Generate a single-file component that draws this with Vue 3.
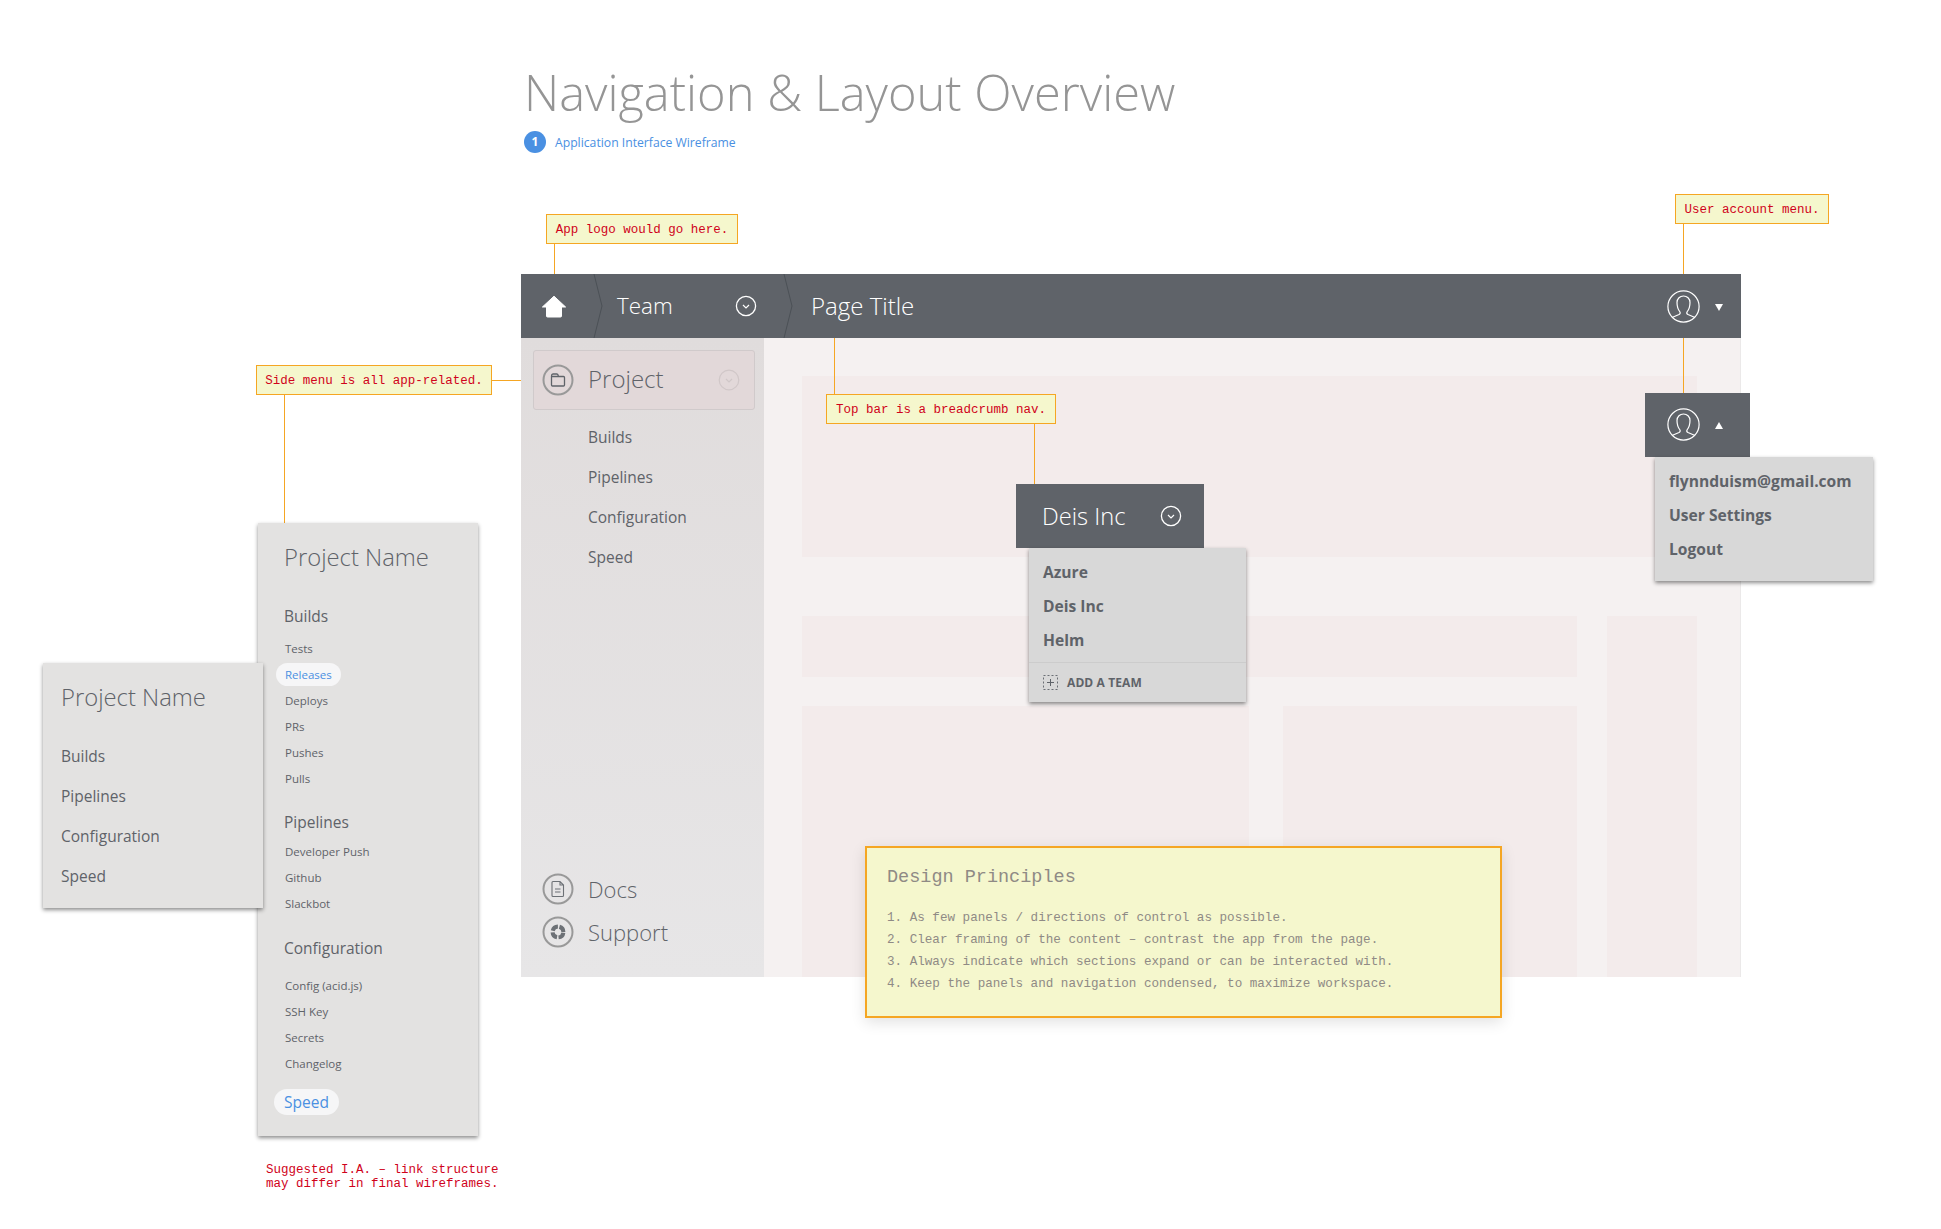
<script setup>
const sideItems = ['Builds', 'Pipelines', 'Configuration', 'Speed']
const teams = ['Azure', 'Deis Inc', 'Helm']
const userItems = ['flynnduism@gmail.com', 'User Settings', 'Logout']
const principles = [
  'As few panels / directions of control as possible.',
  'Clear framing of the content – contrast the app from the page.',
  'Always indicate which sections expand or can be interacted with.',
  'Keep the panels and navigation condensed, to maximize workspace.',
]
const groups = [
  { title: 'Builds', links: ['Tests', 'Releases', 'Deploys', 'PRs', 'Pushes', 'Pulls'] },
  { title: 'Pipelines', links: ['Developer Push', 'Github', 'Slackbot'] },
  { title: 'Configuration', links: ['Config (acid.js)', 'SSH Key', 'Secrets', 'Changelog'] },
]
</script>

<template>
  <div class="canvas">
    <header class="page-head">
      <h1>Navigation &amp; Layout Overview</h1>
      <div class="sub"><span class="badge">1</span><span>Application Interface Wireframe</span></div>
    </header>

    <!-- the app window -->
    <section class="window">
      <div class="topbar">
        <div class="crumb crumb-home">
          <svg width="26" height="23" viewBox="0 0 26 23"><path d="M13 1.2 L24.6 12 L20.5 12 L20.5 21 Q20.5 22 19.5 22 L6.5 22 Q5.5 22 5.5 21 L5.5 12 L1.4 12 Z" fill="#fff" stroke="#fff" stroke-linejoin="round" /></svg>
        </div>
        <svg class="sep" width="10" height="64" viewBox="0 0 10 64"><path d="M1 0 L9 32 L1 64" fill="none" stroke="#4c5056" /></svg>
        <div class="crumb crumb-team">
          <span class="team-label">Team</span>
          <svg width="22" height="22" viewBox="0 0 22 22"><circle cx="11" cy="11" r="9.6" fill="none" stroke="#fff" stroke-width="1.3" /><path d="M8 10 L11 13 L14 10" fill="none" stroke="#fff" stroke-width="1.2" /></svg>
        </div>
        <svg class="sep" width="10" height="64" viewBox="0 0 10 64"><path d="M1 0 L9 32 L1 64" fill="none" stroke="#4c5056" /></svg>
        <div class="crumb crumb-page">Page Title</div>
        <div class="user">
          <svg width="33" height="33" viewBox="0 0 33 33"><circle cx="16.5" cy="16.5" r="15.6" fill="none" stroke="#fff" stroke-width="1.2" /><path d="M5 27.5 L12 24.5 C13 24 13.5 23 13 22 C11 19.5 10 16 10 12.5 C10 8.5 13 6 16.5 6 C20 6 23 8.5 23 12.5 C23 16 22 19.5 20 22 C19.5 23 20 24 21 24.5 L28 27.5" fill="none" stroke="#fff" stroke-width="1.2" /></svg>
          <i class="caret-down"></i>
        </div>
      </div>
      <div class="app-body">
        <aside class="sidebar">
          <div class="project">
            <svg width="32" height="32" viewBox="0 0 32 32"><circle cx="16" cy="16" r="14.5" fill="none" stroke="#999" stroke-width="2" /><path d="M9.5 12 V21 Q9.5 22 10.5 22 H21.5 Q22.5 22 22.5 21 V13.5 Q22.5 12.5 21.5 12.5 H9.5 M9.5 12 Q9.5 10 11 10 H15 Q16 10 16.5 12.5" fill="none" stroke="#5f6369" stroke-width="1.3" /></svg>
            <span class="project-name">Project</span>
            <svg width="22" height="22" viewBox="0 0 22 22"><circle cx="11" cy="11" r="9.8" fill="none" stroke="#d0c7c8" stroke-width="1.2" /><path d="M8 10 L11 13 L14 10" fill="none" stroke="#d0c7c8" stroke-width="1.2" /></svg>
          </div>
          <ul class="side-list">
            <li v-for="item in sideItems" :key="item">{{ item }}</li>
          </ul>
          <div class="side-foot">
            <div class="foot-row">
              <svg width="32" height="32" viewBox="0 0 32 32"><circle cx="16" cy="16" r="14.5" fill="none" stroke="#999" stroke-width="2" /><path d="M11 8.5 H18 L21.5 12 V22.5 Q21.5 23.5 20.5 23.5 H11 Q10 23.5 10 22.5 V9.5 Q10 8.5 11 8.5 Z M18 8.5 V12 H21.5 M13 16 H18.5 M13 19 H18.5" fill="none" stroke="#6d7176" stroke-width="1.1" /></svg>
              <span>Docs</span>
            </div>
            <div class="foot-row">
              <svg width="32" height="32" viewBox="0 0 32 32"><circle cx="16" cy="16" r="14.5" fill="none" stroke="#999" stroke-width="2" /><circle cx="16" cy="16" r="5.4" fill="none" stroke="#6d7176" stroke-width="4" stroke-dasharray="6.9 1.6" stroke-dashoffset="-0.8" /></svg>
              <span>Support</span>
            </div>
          </div>
        </aside>
        <main class="workspace">
          <div class="block block-hero"></div>
          <div class="work-grid">
            <div class="work-left">
              <div class="block block-strip"></div>
              <div class="work-cols">
                <div class="block"></div>
                <div class="block"></div>
              </div>
            </div>
            <div class="block"></div>
          </div>
        </main>
      </div>
    </section>

    <!-- connector lines -->
    <i class="line l-logo"></i>
    <i class="line l-user-a"></i>
    <i class="line l-user-b"></i>
    <i class="line l-crumb-a"></i>
    <i class="line l-crumb-b"></i>
    <i class="line l-side-h"></i>
    <i class="line l-side-v"></i>

    <!-- annotations -->
    <div class="note n-logo">App logo would go here.</div>
    <div class="note n-user">User account menu.</div>
    <div class="note n-crumb">Top bar is a breadcrumb nav.</div>
    <div class="note n-side">Side menu is all app-related.</div>
    <p class="ia-note">Suggested I.A. – link structure<br />may differ in final wireframes.</p>

    <!-- team dropdown -->
    <div class="drop-head team-head">
      <span>Deis Inc</span>
      <svg width="22" height="22" viewBox="0 0 22 22"><circle cx="11" cy="11" r="9.6" fill="none" stroke="#fff" stroke-width="1.3" /><path d="M8 10 L11 13 L14 10" fill="none" stroke="#fff" stroke-width="1.2" /></svg>
    </div>
    <div class="menu team-menu">
      <div class="menu-items">
        <div v-for="t in teams" :key="t" class="menu-item">{{ t }}</div>
      </div>
      <div class="add-team">
        <svg width="15" height="15" viewBox="0 0 15 15"><rect x="0.5" y="0.5" width="14" height="14" fill="none" stroke="#6b6f75" stroke-dasharray="2 2" /><path d="M7.5 4 V11 M4 7.5 H11" stroke="#5f6369" /></svg>
        <span>ADD A TEAM</span>
      </div>
    </div>

    <!-- user dropdown -->
    <div class="drop-head user-head">
      <svg width="33" height="33" viewBox="0 0 33 33"><circle cx="16.5" cy="16.5" r="15.6" fill="none" stroke="#fff" stroke-width="1.2" /><path d="M5 27.5 L12 24.5 C13 24 13.5 23 13 22 C11 19.5 10 16 10 12.5 C10 8.5 13 6 16.5 6 C20 6 23 8.5 23 12.5 C23 16 22 19.5 20 22 C19.5 23 20 24 21 24.5 L28 27.5" fill="none" stroke="#fff" stroke-width="1.2" /></svg>
      <i class="caret-up"></i>
    </div>
    <div class="menu user-menu">
      <div v-for="u in userItems" :key="u" class="menu-item">{{ u }}</div>
    </div>

    <!-- expanded side menu -->
    <div class="flyout fly-full">
      <div class="fly-title">Project Name</div>
      <div v-for="g in groups" :key="g.title" class="fly-group">
        <div class="fly-head">{{ g.title }}</div>
        <div
          v-for="l in g.links"
          :key="l"
          class="fly-link"
          :class="{ active: l === 'Releases' }"
        ><span>{{ l }}</span></div>
      </div>
      <div class="fly-speed"><span>Speed</span></div>
    </div>

    <!-- collapsed side menu -->
    <div class="flyout fly-short">
      <div class="fly-title">Project Name</div>
      <div v-for="item in sideItems" :key="item" class="short-item">{{ item }}</div>
    </div>

    <!-- principles -->
    <div class="principles">
      <h2>Design Principles</h2>
      <ol>
        <li v-for="(p, i) in principles" :key="p">{{ i + 1 }}. {{ p }}</li>
      </ol>
    </div>
  </div>
</template>

<style>
html, body { margin: 0; background: #fff; }
</style>

<style scoped>
.canvas {
  position: relative;
  width: 1941px;
  height: 1229px;
  overflow: hidden;
  background: #fff;
  font-family: "Open Sans", "Noto Sans", sans-serif;
  color: #5f6369;
}

/* ── page heading ── */
.page-head { position: absolute; left: 524px; top: 60px; }
h1 {
  margin: 0;
  font-size: 48.8px;
  font-weight: 300;
  line-height: 64px;
  color: #959595;
  white-space: nowrap;
}
.sub {
  display: flex;
  align-items: center;
  gap: 9px;
  margin-top: 7px;
  font-size: 12.2px;
  color: #4a90e2;
}
.badge {
  width: 22px;
  height: 22px;
  border-radius: 50%;
  background: #4a90e2;
  color: #fff;
  font-size: 12px;
  font-weight: 700;
  text-align: center;
  line-height: 22px;
}

/* ── app window ── */
.window {
  position: absolute;
  left: 521px;
  top: 274px;
  width: 1220px;
  height: 703px;
  display: flex;
  flex-direction: column;
}
.topbar {
  height: 64px;
  flex-shrink: 0;
  display: flex;
  align-items: center;
  background: #5f6369;
  color: #fff;
}
.crumb { font-size: 24px; font-weight: 300; white-space: nowrap; }
.crumb-home { width: 72px; padding-left: 20px; box-sizing: border-box; display: flex; }
.sep { flex-shrink: 0; }
.crumb-team {
  width: 180px;
  box-sizing: border-box;
  padding: 0 26px 0 14px;
  display: flex;
  align-items: center;
  justify-content: space-between;
}
.team-label { font-size: 22.4px; margin-top: -2px; }
.crumb-page { margin-left: 18px; margin-top: -2px; }
.user {
  margin-left: auto;
  display: flex;
  align-items: center;
  gap: 15px;
  padding-right: 18px;
}
.caret-down, .caret-up { width: 0; height: 0; border-left: 4px solid transparent; border-right: 4px solid transparent; }
.caret-down { border-top: 7px solid #fff; margin-top: 2px; }
.caret-up { border-bottom: 7px solid #fff; margin-top: 2px; }

.app-body { flex: 1; min-height: 0; display: flex; }
.sidebar {
  width: 243px;
  flex-shrink: 0;
  box-sizing: border-box;
  padding: 12px 9px 0 12px;
  display: flex;
  flex-direction: column;
  background: linear-gradient(#e0dcdc, #e7e6e7);
}
.project {
  height: 60px;
  box-sizing: border-box;
  display: flex;
  align-items: center;
  padding: 0 14px 0 8px;
  background: #e2d8d9;
  border: 1px solid #d0cacb;
  border-radius: 3px;
}
.project-name { flex: 1; margin-left: 14px; margin-top: -4px; font-size: 24px; font-weight: 300; }
.side-list { list-style: none; margin: 7px 0 0; padding: 0 0 0 55px; }
.side-list li { height: 40px; line-height: 40px; font-size: 15.5px; }
.side-foot { margin-top: auto; padding: 0 0 29px 9px; display: flex; flex-direction: column; gap: 11px; }
.foot-row { display: flex; align-items: center; gap: 14px; font-size: 22px; font-weight: 300; }
.foot-row span { line-height: 32px; }

.workspace {
  flex: 1;
  box-sizing: border-box;
  padding: 38px 43px 0 38px;
  display: flex;
  flex-direction: column;
  gap: 59px;
  background: #f5f1f1;
  border-right: 1px solid #ebe9e9;
}
.block { background: #f3ebeb; }
.block-hero { height: 181px; }
.work-grid { flex: 1; display: grid; grid-template-columns: 775px 90px; gap: 30px; }
.work-left { display: flex; flex-direction: column; gap: 29px; }
.block-strip { height: 61px; }
.work-cols { flex: 1; display: grid; grid-template-columns: 447px 294px; gap: 34px; }

/* ── connectors ── */
.line { position: absolute; background: #f5a623; }
.l-logo { left: 554px; top: 244px; width: 1px; height: 30px; }
.l-user-a { left: 1683px; top: 224px; width: 1px; height: 50px; }
.l-user-b { left: 1683px; top: 338px; width: 1px; height: 55px; }
.l-crumb-a { left: 834px; top: 338px; width: 1px; height: 56px; }
.l-crumb-b { left: 1034px; top: 424px; width: 1px; height: 60px; }
.l-side-h { left: 492px; top: 380px; width: 29px; height: 1px; }
.l-side-v { left: 284px; top: 395px; width: 1px; height: 128px; }

/* ── annotations ── */
.note {
  position: absolute;
  height: 30px;
  box-sizing: border-box;
  border: 1px solid #f5a623;
  background: #f5f7cd;
  color: #d0021b;
  font-family: "Liberation Mono", monospace;
  font-size: 12.5px;
  line-height: 30px;
  white-space: nowrap;
  text-align: center;
}
.n-logo { left: 546px; top: 214px; width: 192px; }
.n-user { left: 1675px; top: 194px; width: 154px; }
.n-crumb { left: 826px; top: 394px; width: 230px; }
.n-side { left: 256px; top: 365px; width: 236px; }
.ia-note {
  position: absolute;
  left: 266px;
  top: 1163px;
  margin: 0;
  color: #d0021b;
  font-family: "Liberation Mono", monospace;
  font-size: 12.5px;
  line-height: 14px;
  white-space: nowrap;
}

/* ── dropdowns ── */
.drop-head {
  position: absolute;
  box-sizing: border-box;
  height: 64px;
  display: flex;
  align-items: center;
  background: #5f6369;
  color: #fff;
}
.team-head {
  left: 1016px;
  top: 484px;
  width: 188px;
  padding: 0 22px 0 26px;
  justify-content: space-between;
  font-size: 23.7px;
  font-weight: 300;
}
.user-head {
  left: 1645px;
  top: 393px;
  width: 105px;
  padding: 0 0 2px 22px;
  gap: 15px;
}
.menu {
  position: absolute;
  box-sizing: border-box;
  background: #d8d8d8;
  box-shadow: 0 2px 4px rgba(0, 0, 0, 0.45);
}
.menu-item {
  height: 34px;
  line-height: 34px;
  font-size: 15.6px;
  font-weight: 700;
  white-space: nowrap;
}
.team-menu { left: 1029px; top: 548px; width: 217px; height: 154px; }
.menu-items { height: 114px; box-sizing: border-box; padding: 7px 0 0 14px; }
.add-team {
  height: 40px;
  box-sizing: border-box;
  border-top: 1px solid #ccc;
  padding-left: 14px;
  display: flex;
  align-items: center;
  gap: 9px;
  font-size: 12px;
  font-weight: 700;
  letter-spacing: 0.1px;
}
.user-menu { left: 1655px; top: 457px; width: 218px; height: 124px; padding: 7px 0 0 14px; }

/* ── side menu flyouts ── */
.flyout {
  position: absolute;
  box-sizing: border-box;
  background: #e3e2e1;
  box-shadow: 0 2px 4px rgba(0, 0, 0, 0.45);
}
.fly-title { font-size: 23.8px; font-weight: 300; line-height: 32px; white-space: nowrap; }
.fly-full { left: 258px; top: 523px; width: 220px; height: 613px; padding: 18px 0 0 26px; }
.fly-head { height: 30px; line-height: 30px; font-size: 15.5px; }
.fly-group:nth-child(2) { padding-top: 28px; }
.fly-group:nth-child(3) { padding-top: 15px; }
.fly-group:nth-child(4) { padding-top: 16px; }
.fly-group:nth-child(4) .fly-head { margin-bottom: 10px; }
.fly-group:nth-child(3) .fly-head { margin-bottom: 2px; }
.fly-group:nth-child(2) .fly-head { margin-bottom: 5px; }
.fly-link { height: 26px; line-height: 26px; font-size: 11.5px; padding-left: 1px; }
.fly-link.active span,
.fly-speed span {
  display: inline-block;
  border-radius: 13px;
  color: #4a90e2;
  background: #f6f6f7;
}
.fly-link.active span { margin-left: -9px; padding: 0 9px; height: 23px; line-height: 23px; }
.fly-speed { margin-top: 12px; font-size: 15.5px; }
.fly-speed span { margin-left: -10px; padding: 0 10px; height: 26px; line-height: 26px; }

.fly-short { left: 43px; top: 663px; width: 220px; height: 245px; padding: 18px 0 0 18px; }
.fly-short .fly-title { margin-bottom: 23px; }
.short-item { height: 40px; line-height: 40px; font-size: 15.5px; }

/* ── design principles ── */
.principles {
  position: absolute;
  left: 865px;
  top: 846px;
  width: 637px;
  height: 172px;
  box-sizing: border-box;
  padding: 18px 20px 0;
  background: #f5f7cd;
  border: 2px solid #f5a623;
  box-shadow: 0 4px 14px rgba(0, 0, 0, 0.12);
  font-family: "Liberation Mono", monospace;
  color: #8f8a85;
}
h2 { margin: 0; font-size: 18.5px; font-weight: 400; line-height: 24px; }
ol { list-style: none; margin: 17px 0 0; padding: 0; font-size: 12.6px; }
li { line-height: 22px; white-space: nowrap; }
.side-list li { height: 40px; line-height: 40px; font-size: 15.5px; }
</style>
